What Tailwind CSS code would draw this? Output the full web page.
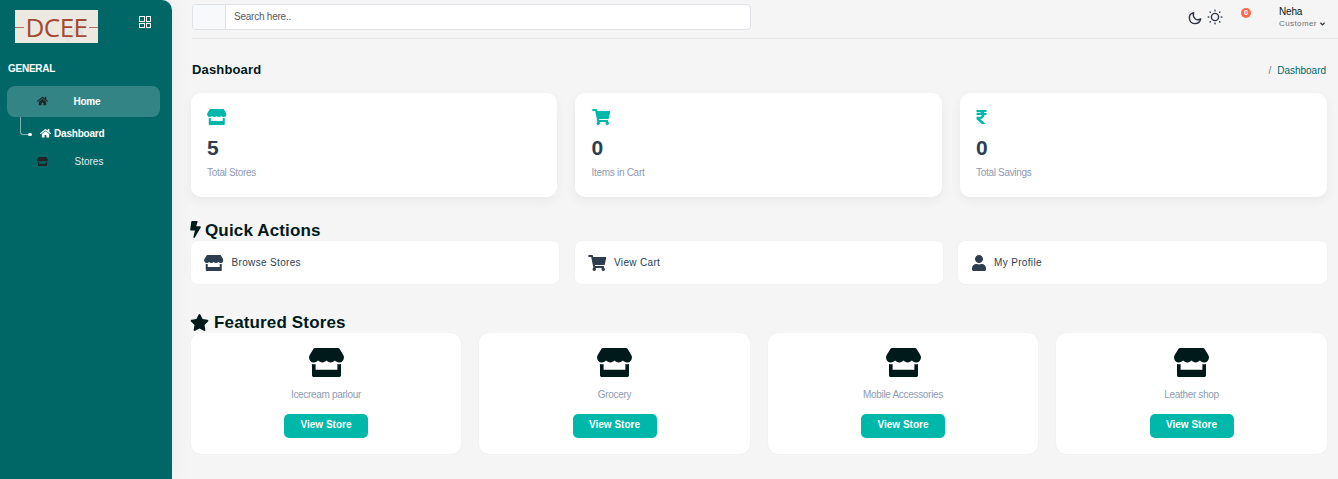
<!DOCTYPE html>
<html lang="en">
<head>
<meta charset="utf-8">
<title>Dashboard</title>
<script src="https://cdn.jsdelivr.net/npm/@tailwindcss/browser@4"></script>
</head>
<body class="h-[479px] overflow-hidden bg-[#f5f5f5] font-['Liberation_Sans',Arial,sans-serif] text-[#001a1c]">
<svg class="hidden">
  <symbol id="store" viewBox="0 0 616 512"><path d="M602 118.6L537.1 15C531.3 5.7 521 0 510 0H106C95 0 84.7 5.7 78.9 15L14 118.6c-33.5 53.5-3.8 127.9 58.8 136.4 4.5.6 9.1.9 13.7.9 29.6 0 55.8-13 73.8-33.1 18 20.1 44.3 33.1 73.8 33.1 29.6 0 55.8-13 73.8-33.1 18 20.1 44.3 33.1 73.8 33.1 29.6 0 55.8-13 73.8-33.1 18.1 20.1 44.3 33.1 73.8 33.1 4.7 0 9.2-.3 13.7-.9 62.8-8.4 92.6-82.8 59-136.4zM529.5 288c-10 0-19.9-1.5-29.5-3.8V384H116v-99.8c-9.6 2.2-19.5 3.8-29.5 3.8-6 0-12.1-.4-18-1.2-5.6-.8-11.1-2.1-16.4-3.6V480c0 17.7 14.3 32 32 32h448c17.7 0 32-14.3 32-32V283.2c-5.4 1.6-10.8 2.9-16.4 3.6-6.1.8-12.1 1.2-18.2 1.2z"/></symbol>
  <symbol id="cart" viewBox="0 0 576 512"><path d="M528.12 301.319l47.273-208C578.806 78.301 567.391 64 551.99 64H159.208l-9.166-44.81C147.758 8.021 137.93 0 126.529 0H24C10.745 0 0 10.745 0 24v16c0 13.255 10.745 24 24 24h69.883l70.248 343.435C147.325 417.1 136 435.222 136 456c0 30.928 25.072 56 56 56s56-25.072 56-56c0-15.674-6.447-29.835-16.824-40h209.647C430.447 426.165 424 440.326 424 456c0 30.928 25.072 56 56 56s56-25.072 56-56c0-22.172-12.888-41.332-31.579-50.405l5.517-24.276c3.413-15.018-8.002-29.319-23.403-29.319H218.117l-6.545-32h293.145c11.206 0 20.92-7.754 23.403-18.681z"/></symbol>
  <symbol id="home" viewBox="0 0 576 512"><path d="M280.37 148.26L96 300.11V464a16 16 0 0 0 16 16l112.06-.29a16 16 0 0 0 15.92-16V368a16 16 0 0 1 16-16h64a16 16 0 0 1 16 16v95.64a16 16 0 0 0 16 16.05L464 480a16 16 0 0 0 16-16V300L295.67 148.26a12.19 12.19 0 0 0-15.3 0zM571.6 251.47L488 182.56V44.05a12 12 0 0 0-12-12h-56a12 12 0 0 0-12 12v72.61L318.47 43a48 48 0 0 0-61 0L4.34 251.47a12 12 0 0 0-1.6 16.9l25.5 31A12 12 0 0 0 45.15 301l235.22-193.74a12.19 12.19 0 0 1 15.3 0L530.9 301a12 12 0 0 0 16.9-1.6l25.5-31a12 12 0 0 0-1.7-16.93z"/></symbol>
</svg>
<div class="flex h-full">
  <aside class="h-full w-[172px] shrink-0 rounded-tr-[10px] bg-[#006666] text-white shadow-[0_0_21px_3px_rgba(89,102,122,0.05)]">
    <div class="flex items-start pt-[10px] pl-[15px]">
      <div class="relative flex h-[33px] w-[83px] items-center justify-between bg-[#ece9e0] text-[#a34a35]">
        <span class="absolute top-[13px] left-[47px] -rotate-[35deg] text-[14px] leading-none text-[#e0ddd5]">logo</span>
        <span class="mt-[2px] h-px w-[9px] bg-[#b87060]"></span>
        <span class="relative mt-[2px] font-['Open_Sans','Noto_Sans',sans-serif] text-[26px] leading-[33px] font-medium tracking-[-0.5px]">DCEE</span>
        <span class="mt-[2px] h-px w-[9px] bg-[#b87060]"></span>
      </div>
      <div class="mt-[6px] ml-[41px] grid grid-cols-2 gap-px">
        <i class="size-[5.5px] border border-white"></i><i class="size-[5.5px] border border-white"></i>
        <i class="size-[5.5px] border border-white"></i><i class="size-[5.5px] border border-white"></i>
      </div>
    </div>
    <div class="mt-[20px] pl-2 text-[10px] leading-3 font-bold tracking-[-0.25px]">GENERAL</div>
    <div class="mt-[11px] ml-[7px] flex h-[31px] w-[153px] items-center rounded-[8px] bg-[#338585] pl-[30px] text-[10px] font-bold tracking-[-0.25px]">
      <svg class="mb-[2px] h-[10px] w-[11px] fill-[#212529]"><use href="#home"/></svg><span class="ml-[25.5px] pb-px">Home</span>
    </div>
    <div class="flex h-[32px] items-center pl-[20px] text-[10px] font-bold tracking-[-0.2px]">
      <div class="flex h-full w-[12px] items-start"><div class="relative h-[18px] w-[8px] rounded-bl-[3px] border-b border-l border-[#7fb2b2]"><i class="absolute -right-[4px] -bottom-[2px] h-[3px] w-[4px] rounded-full bg-white"></i></div></div>
      <svg class="ml-[8px] h-[10.5px] w-[11px] fill-white"><use href="#home"/></svg><span class="ml-[3px] pt-px">Dashboard</span>
    </div>
    <div class="mt-[5px] flex h-[14px] items-center pl-[37px] text-[10px] text-[#e0eded]">
      <svg class="h-[9px] w-[11px] fill-[#212529]"><use href="#store"/></svg><span class="ml-[26.5px] pt-px">Stores</span>
    </div>
  </aside>

  <main class="flex min-w-0 flex-1 flex-col pl-[19px]">
    <header class="ml-px flex h-[39px] border-b border-[#e5e5e5]">
      <div class="mt-1 flex h-[26px] w-[559px] overflow-hidden rounded-[4px] border border-[#dee2e6] bg-white">
        <div class="w-[33px] border-r border-[#dee2e6] bg-[#f8f9fb]"></div>
        <span class="pl-2 text-[10px] leading-[24px] tracking-[-0.230px] text-[#595c5f]">Search here..</span>
      </div>
      <div class="ml-[437px] flex pt-[9px]">
        <svg class="mt-[2px] size-[14px] fill-none stroke-[#2c323f]" viewBox="0 0 14 14" stroke-width="1.4" stroke-linejoin="round"><path d="M5.600 1.600C2.900 2.300 1.100 4.500 1.400 7.500c.3 3 2.700 5.100 5.600 5.100 2.900 0 5.200-1.900 5.700-4.700-1.600 1-4.100 1.100-5.800-.5C5.300 5.800 5 3.500 5.600 1.600Z"/></svg>
        <svg class="ml-[5px] size-[16px] fill-none stroke-[#2c323f]" viewBox="0 0 16 16" stroke-width="1.400" stroke-linecap="round"><circle cx="8" cy="8" r="3.600"/><path d="M8 1.200v.5M8 14.300v.5M1.200 8h.5M14.300 8h.5M3.100 3.100l.2.200M12.700 12.700l.2.200M12.900 3.100l-.2.200M3.300 12.700l-.2.200"/></svg>
      </div>
      <span class="mt-2 ml-[18px] flex size-[10px] items-center justify-center rounded-full bg-[#fd6a48] text-[7.500px] leading-none font-bold text-white">0</span>
      <div class="ml-[28px] pt-[6px] text-[10px] leading-[12px]">
        <div class="tracking-[-0.200px]">Neha</div>
        <div class="flex items-center text-[8px] leading-[11px] text-[#6e7277]"><span class="tracking-[0.400px]">Customer</span><svg class="mt-px ml-[3px] h-[4px] w-[5px] fill-none stroke-[#333]" viewBox="0 0 5 4" stroke-width="1.300"><path d="M.4.8 2.500 2.900 4.600.8"/></svg></div>
      </div>
    </header>

    <div class="ml-px flex h-[54px] items-center justify-between pt-[7px] pr-3">
      <h1 class="text-[13px] leading-4 font-bold tracking-[0.15px]">Dashboard</h1>
      <div class="flex gap-[6px] pt-px text-[10px] tracking-[-0.020px] text-[#006666]"><span class="text-[#6c757d]">/</span><span>Dashboard</span></div>
    </div>

    <section class="grid grid-cols-[366px_367px_367px] gap-x-[18px]">
      <div class="h-[104px] rounded-[10px] bg-white pt-[16px] pl-4 shadow-[0_4px_12px_rgba(0,0,0,0.05)]">
        <svg class="h-[16px] w-[19.500px] fill-[#00b8a9]"><use href="#store"/></svg>
        <div class="mt-[11px] text-[21px] leading-[24px] font-bold text-[#2c3e50]">5</div>
        <div class="mt-[7px] text-[10px] leading-[12px] tracking-[-0.320px] text-[#8e9bb3]">Total Stores</div>
      </div>
      <div class="h-[104px] rounded-[10px] bg-white pt-[16px] pl-[16.500px] shadow-[0_4px_12px_rgba(0,0,0,0.05)]">
        <svg class="h-[16px] w-[18.500px] fill-[#00b8a9]"><use href="#cart"/></svg>
        <div class="mt-[11px] text-[21px] leading-[24px] font-bold text-[#2c3e50]">0</div>
        <div class="mt-[7px] text-[10px] leading-[12px] tracking-[-0.290px] text-[#8e9bb3]">Items in Cart</div>
      </div>
      <div class="h-[104px] rounded-[10px] bg-white pt-[16px] pl-4 shadow-[0_4px_12px_rgba(0,0,0,0.05)]">
        <svg class="h-[16px] w-[11px] fill-[#00b8a9]" viewBox="0 0 320 512"><path d="M308 96c6.627 0 12-5.373 12-12V44c0-6.627-5.373-12-12-12H12C5.373 32 0 37.373 0 44v44.748c0 6.627 5.373 12 12 12h85.280c27.308 0 48.261 9.958 60.970 27.252H12c-6.627 0-12 5.373-12 12v40c0 6.627 5.373 12 12 12h158.757c-6.217 36.086-32.961 58.632-74.757 58.632H12c-6.627 0-12 5.373-12 12v53.012c0 3.349 1.400 6.546 3.861 8.818l165.052 152.356a12.001 12.001 0 0 0 8.139 3.182h82.562c10.924 0 16.166-13.408 8.139-20.818L116.871 319.906c76.499-2.340 131.144-53.395 138.318-127.906H308c6.627 0 12-5.373 12-12v-40c0-6.627-5.373-12-12-12h-58.690c-3.486-11.541-8.280-22.246-14.252-32H308z"/></svg>
        <div class="mt-[11px] text-[21px] leading-[24px] font-bold text-[#2c3e50]">0</div>
        <div class="mt-[7px] text-[10px] leading-[12px] tracking-[-0.310px] text-[#8e9bb3]">Total Savings</div>
      </div>
    </section>

    <h2 class="-ml-px mt-[23px] flex h-[21px] items-center text-[17px] leading-5 font-bold tracking-[0.150px]"><svg class="mb-[2px] h-[17px] w-[11px] fill-current" viewBox="0 0 320 512"><path d="M296 160H180.600l42.600-129.800C227.200 15 215.700 0 200 0H56C44 0 33.800 8.900 32.200 20.800l-32 240C-1.700 275.200 9.500 288 24 288h118.700L96.600 482.500c-3.600 15.200 8 29.500 23.300 29.500 8.400 0 16.400-4.400 20.800-12l176-304c9.300-15.900-2.200-36-20.700-36z"/></svg><span class="ml-[4px]">Quick Actions</span></h2>
    <section class="grid grid-cols-[368px_368px_369px] gap-x-[15.500px] text-[10px] tracking-[0.340px] text-[#2c3e50]">
      <div class="flex h-[43px] items-center rounded-[7px] bg-white pl-[13px] shadow-[0_0_2px_rgba(0,0,0,0.05)]"><svg class="h-[16px] w-[19.500px] fill-[#2c3e50]"><use href="#store"/></svg><span class="ml-[8px] pb-px">Browse Stores</span></div>
      <div class="flex h-[43px] items-center rounded-[7px] bg-white pl-[13px] shadow-[0_0_2px_rgba(0,0,0,0.05)]"><svg class="h-[16px] w-[18.500px] fill-[#2c3e50]"><use href="#cart"/></svg><span class="ml-[8px] pb-px">View Cart</span></div>
      <div class="flex h-[43px] items-center rounded-[7px] bg-white pl-[14px] shadow-[0_0_2px_rgba(0,0,0,0.05)]"><svg class="h-[16px] w-[14px] fill-[#2c3e50]" viewBox="0 0 448 512"><path d="M224 256c70.700 0 128-57.300 128-128S294.700 0 224 0 96 57.300 96 128s57.300 128 128 128zm89.600 32h-16.700c-22.200 10.200-46.900 16-72.900 16s-50.600-5.800-72.900-16h-16.700C60.200 288 0 348.200 0 422.400V464c0 26.500 21.500 48 48 48h352c26.500 0 48-21.500 48-48v-41.600c0-74.200-60.200-134.400-134.400-134.400z"/></svg><span class="ml-[8px] pb-px">My Profile</span></div>
    </section>

    <h2 class="-ml-px mt-[28px] flex h-[21px] items-center text-[17px] leading-5 font-bold tracking-[0.150px]"><svg class="mb-px h-[17px] w-[19px] fill-current" viewBox="0 0 576 512"><path d="M259.300 17.800L194 150.200 47.900 171.500c-26.200 3.800-36.700 36.100-17.700 54.600l105.700 103-25 145.500c-4.500 26.300 23.200 46 46.400 33.700L288 439.600l130.700 68.700c23.200 12.200 50.900-7.400 46.400-33.700l-25-145.500 105.700-103c19-18.500 8.500-50.800-17.700-54.600L382 150.200 316.700 17.800c-11.700-23.600-45.600-23.900-57.400 0z"/></svg><span class="ml-[5px]">Featured Stores</span></h2>
    <section class="grid grid-cols-[270px_271px_270px_271px] gap-x-[18px] text-[10px]">
      <div class="flex h-[121px] flex-col items-center rounded-[10px] bg-white pt-[15px] shadow-[0_0_2px_rgba(0,0,0,0.05)]"><svg class="h-[29px] w-[35px] fill-current"><use href="#store"/></svg><span class="mt-[12px] leading-3 tracking-[-0.310px] text-[#8e9bb3]">Icecream parlour</span><span class="mt-[13px] h-6 w-[84px] rounded-[5px] bg-[#00b8a9] text-center leading-[22px] font-bold tracking-[0.030px] text-white">View Store</span></div>
      <div class="flex h-[121px] flex-col items-center rounded-[10px] bg-white pt-[15px] shadow-[0_0_2px_rgba(0,0,0,0.05)]"><svg class="h-[29px] w-[35px] fill-current"><use href="#store"/></svg><span class="mt-[12px] leading-3 tracking-[-0.310px] text-[#8e9bb3]">Grocery</span><span class="mt-[13px] h-6 w-[84px] rounded-[5px] bg-[#00b8a9] text-center leading-[22px] font-bold tracking-[0.030px] text-white">View Store</span></div>
      <div class="flex h-[121px] flex-col items-center rounded-[10px] bg-white pt-[15px] shadow-[0_0_2px_rgba(0,0,0,0.05)]"><svg class="h-[29px] w-[35px] fill-current"><use href="#store"/></svg><span class="mt-[12px] leading-3 tracking-[-0.310px] text-[#8e9bb3]">Mobile Accessories</span><span class="mt-[13px] h-6 w-[84px] rounded-[5px] bg-[#00b8a9] text-center leading-[22px] font-bold tracking-[0.030px] text-white">View Store</span></div>
      <div class="flex h-[121px] flex-col items-center rounded-[10px] bg-white pt-[15px] shadow-[0_0_2px_rgba(0,0,0,0.05)]"><svg class="h-[29px] w-[35px] fill-current"><use href="#store"/></svg><span class="mt-[12px] leading-3 tracking-[-0.310px] text-[#8e9bb3]">Leather shop</span><span class="mt-[13px] h-6 w-[84px] rounded-[5px] bg-[#00b8a9] text-center leading-[22px] font-bold tracking-[0.030px] text-white">View Store</span></div>
    </section>
  </main>
</div>
</body>
</html>
